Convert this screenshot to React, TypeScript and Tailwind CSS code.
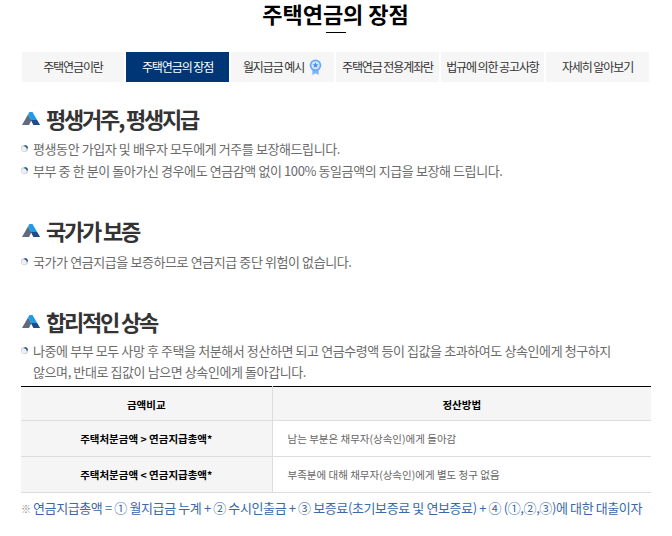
const font = { fontFamily: '"Noto Sans CJK KR", "Noto Sans", sans-serif' };

const tabs = [
  { label: "주택연금이란" },
  { label: "주택연금의 장점", active: true },
  { label: "월지급금 예시", medal: true },
  { label: "주택연금 전용계좌란" },
  { label: "법규에 의한 공고사항" },
  { label: "자세히 알아보기" },
];

function Medal() {
  return (
    <svg width="13" height="17" viewBox="0 0 14 19" className="ml-[5px]">
      <path d="M3.500 10v8l3.500-2 3.500 2v-8z" fill="#7db4f7" />
      <circle cx="7" cy="7" r="6.500" fill="#6aa8f5" />
      <circle cx="7" cy="7" r="4.500" fill="#d6e7fc" />
      <path d="M7 3.600l1 2.200 2.300.2-1.800 1.500.6 2.300L7 8.600 4.900 9.800l.6-2.300L3.700 6l2.300-.2z" fill="#4a8fe8" />
    </svg>
  );
}

function HeadIcon() {
  return (
    <svg width="18" height="13" viewBox="0 0 18 13" className="shrink-0">
      <path d="M0 13L6 2.500 9.500 8 7 13z" fill="#5f6b7c" />
      <path d="M6 2.500L7.500 0h3L18 13h-6.500L9 8z" fill="#1f9be8" />
      <path d="M9 8l2.500 5H18l-3-5z" fill="#1f4c86" />
    </svg>
  );
}

function Bullet() {
  return (
    <svg width="7" height="7" viewBox="0 0 7 7" className="-ml-px mt-[7px] shrink-0">
      <circle cx="3.500" cy="3.500" r="3.500" fill="#c6ccd4" />
      <circle cx="3" cy="4" r="2.500" fill="#eef0f3" />
      <path d="M3.500 0A3.500 3.500 0 0 1 7 3.500H5.500A2 2 0 0 0 3.500 1.500z" fill="#2a5590" />
    </svg>
  );
}

function Heading({ children }: { children: string }) {
  return (
    <h3 className="flex h-[30px] items-center gap-[6px] text-[22px] font-bold tracking-[-2.2px] text-[#333]">
      <HeadIcon />
      {children}
    </h3>
  );
}

function Item({ children }: { children: React.ReactNode }) {
  return (
    <li className="flex gap-[5px] text-[13px] leading-[21px] tracking-[-0.41px] text-[#6b6b6b]">
      <Bullet />
      <span>{children}</span>
    </li>
  );
}

export default function App() {
  return (
    <div className="h-[536px] w-[672px] overflow-hidden bg-white pl-[22px] pt-[1px]" style={font}>
      <div className="w-[627px]">
        <h2 className="text-center text-[22px] font-bold leading-[24px] text-black">주택연금의 장점</h2>
        <div className="mx-auto mt-[7px] h-px w-[20px] bg-black" />

        <div className="mt-[19px] grid grid-cols-[102px_repeat(5,103px)] gap-[2px]">
          {tabs.map((t) => (
            <div
              key={t.label}
              className={`flex h-[30px] items-center justify-center whitespace-nowrap text-[12px] tracking-[-1.1px] ${
                t.active ? "bg-[#003675] text-white" : "bg-[#f6f6f6] text-[#333]"
              }`}
            >
              {t.label}
              {t.medal && <Medal />}
            </div>
          ))}
        </div>

        <section className="mt-[21px]">
          <Heading>평생거주, 평생지급</Heading>
          <ul className="mt-[5px] space-y-[1px]">
            <Item>평생동안 가입자 및 배우자 모두에게 거주를 보장해드립니다.</Item>
            <Item>부부 중 한 분이 돌아가신 경우에도 연금감액 없이 100% 동일금액의 지급을 보장해 드립니다.</Item>
          </ul>
        </section>

        <section className="mt-[34px]">
          <Heading>국가가 보증</Heading>
          <ul className="mt-[6px]">
            <Item>국가가 연금지급을 보증하므로 연금지급 중단 위험이 없습니다.</Item>
          </ul>
        </section>

        <section className="mt-[34px]">
          <Heading>합리적인 상속</Heading>
          <ul className="mt-[4px]">
            <Item>
              나중에 부부 모두 사망 후 주택을 처분해서 정산하면 되고 연금수령액 등이 집값을 초과하여도 상속인에게 청구하지
              <br />
              않으며, 반대로 집값이 남으면 상속인에게 돌아갑니다.
            </Item>
          </ul>
        </section>
      </div>

      <table className="mt-[4px] w-[630px] -translate-x-px table-fixed border-t border-t-black text-[10.5px]">
        <colgroup>
          <col className="w-[251px]" />
          <col />
        </colgroup>
        <thead>
          <tr className="h-[34px] border-b border-[#ddd] bg-[#f5f5f5]">
            <th className="border-r border-[#ddd] pt-[2px] font-bold text-black">금액비교</th>
            <th className="pt-[2px] font-bold text-black">정산방법</th>
          </tr>
        </thead>
        <tbody>
          <tr className="h-[36px] border-b border-[#ddd]">
            <td className="border-r border-[#ddd] bg-[#f5f5f5] text-center font-bold text-black">
              주택처분금액 &gt; 연금지급총액*
            </td>
            <td className="pl-[15px] text-[#666]">남는 부분은 채무자(상속인)에게 돌아감</td>
          </tr>
          <tr className="h-[36px] border-b border-[#ddd]">
            <td className="border-r border-[#ddd] bg-[#f5f5f5] text-center font-bold text-black">
              주택처분금액 &lt; 연금지급총액*
            </td>
            <td className="pl-[15px] text-[#666]">부족분에 대해 채무자(상속인)에게 별도 청구 없음</td>
          </tr>
        </tbody>
      </table>

      <p className="mt-[5px] -translate-x-px whitespace-nowrap text-[13px] leading-[20px] tracking-[-0.39px] text-[#3a68a8]">
        <span className="inline-block w-[12px] text-[10px] text-[#888]">※</span>연금지급총액 = ① 월지급금 누계 + ② 수시인출금 + ③ 보증료(초기보증료 및 연보증료) + ④ (①,②,③)에 대한 대출이자
      </p>
    </div>
  );
}
